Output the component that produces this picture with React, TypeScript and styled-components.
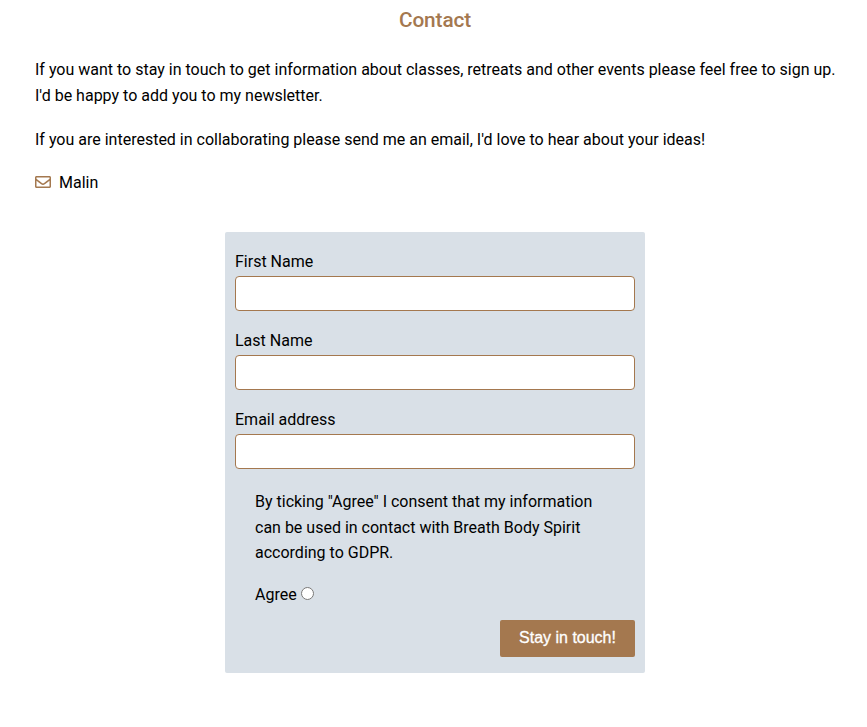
import React from "react";
import styled, { createGlobalStyle } from "styled-components";

const GlobalStyle = createGlobalStyle`
  *, *::before, *::after { box-sizing: border-box; }
  body { margin: 0; background: #fff; color: #000; font: 400 16px/25.6px Roboto, sans-serif; }
`;
const Page = styled.main`padding: 6px 25px 0 35px;`;
const Title = styled.h1`
  margin: 0 0 23px;
  padding-right: 7px;
  text-align: center;
  color: #a4784f;
  font-size: 20.8px;
  font-weight: 500;
  line-height: 28px;
  letter-spacing: -0.1px;
`;
const Paragraph = styled.p`margin: 0 0 18.4px;`;
const Mail = styled.a`
  display: flex;
  align-items: center;
  gap: 8px;
  color: inherit;
  text-decoration: none;
  margin-top: -1px;
`;
const MailIcon = styled.svg`width: 16px; height: 16px; fill: #a4784f; margin-bottom: 1px;`;
const Form = styled.form`
  width: 420px;
  margin: 37.2px 0 0 190px;
  padding: 17px 10px 16px;
  background: #d9e0e7;
  border-radius: 2px;
`;
const Field = styled.label`display: block; margin-bottom: 17px; line-height: 25px;`;
const Input = styled.input`
  display: block;
  width: 100%;
  height: 35px;
  margin-top: 2px;
  border: 1px solid #a4784f;
  border-radius: 4px;
  background: #fff;
`;
const Consent = styled.div`padding: 2.6px 20px 0;`;
const Agree = styled.label`display: flex; align-items: center; margin-top: 16px;`;
const Radio = styled.input`width: 13px; height: 13px; margin: 0 0 2px 4px;`;
const Submit = styled.button`
  display: block;
  width: 135px;
  height: 37px;
  margin: 12.6px 0 0 auto;
  padding: 0;
  border: 0;
  border-radius: 2px;
  background: #a4784f;
  color: #fff;
  font: 400 16px "Liberation Sans", Arial, sans-serif;
  -webkit-text-stroke: 0.3px #fff;
`;

export default function App() {
  return (
    <>
      <GlobalStyle />
      <Page>
        <Title>Contact</Title>
        <Paragraph>
          If you want to stay in touch to get information about classes, retreats and other events please feel free to sign up. I'd be happy to add you to my newsletter.
        </Paragraph>
        <Paragraph>If you are interested in collaborating please send me an email, I'd love to hear about your ideas!</Paragraph>
        <Mail>
          <MailIcon viewBox="0 0 512 512" aria-hidden="true">
            <path d="M464 64H48C21.49 64 0 85.49 0 112v288c0 26.51 21.49 48 48 48h416c26.51 0 48-21.49 48-48V112c0-26.51-21.49-48-48-48zm0 48v40.805c-22.422 18.259-58.168 46.651-134.587 106.49-16.841 13.247-50.201 45.072-73.413 44.701-23.208.375-56.579-31.459-73.413-44.701C106.18 199.465 70.425 171.067 48 152.805V112h416zM48 400V214.398c22.914 18.251 55.409 43.862 104.938 82.646 21.857 17.205 60.134 55.186 103.062 54.955 42.717.231 80.509-37.199 103.053-54.947 49.528-38.783 82.032-64.401 104.947-82.653V400H48z" />
          </MailIcon>
          Malin
        </Mail>
        <Form>
          {["First Name", "Last Name", "Email address"].map((label) => (
            <Field key={label}>{label}<Input /></Field>
          ))}
          <Consent>
            By ticking "Agree" I consent that my information can be used in contact with Breath Body Spirit according to GDPR.
            <Agree>Agree<Radio type="radio" name="agree" /></Agree>
          </Consent>
          <Submit type="button">Stay in touch!</Submit>
        </Form>
      </Page>
    </>
  );
}
